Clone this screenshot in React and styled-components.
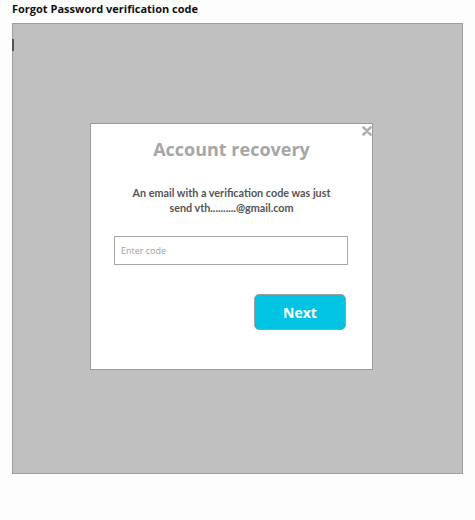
import React from 'react'
import styled, { createGlobalStyle } from 'styled-components'

const Global = createGlobalStyle`
  html, body {
    margin: 0;
    padding: 0;
    background: #fdfdfd;
    font-family: "Open Sans", "Liberation Sans", sans-serif;
  }
`

const Page = styled.div`
  width: 475px;
  height: 520px;
  padding: 0 0 0 12px;
  box-sizing: border-box;
`

const Title = styled.h1`
  margin: 0;
  height: 23px;
  line-height: 18px;
  font-size: 11px;
  font-weight: 700;
  color: #111;
`

const Backdrop = styled.div`
  position: relative;
  width: 451px;
  height: 451px;
  box-sizing: border-box;
  background: #c0c0c0;
  border: 1px solid #9e9e9e;
  padding: 99px 0 0 77px;
`

const Caret = styled.span`
  position: absolute;
  left: -1px;
  top: 15px;
  width: 2px;
  height: 12px;
  background: #555;
`

const Modal = styled.div`
  position: relative;
  width: 283px;
  height: 247px;
  box-sizing: border-box;
  background: #fff;
  border: 1px solid #9a9a9a;
  display: flex;
  flex-direction: column;
  align-items: center;
`

const Close = styled.svg`
  position: absolute;
  top: 2px;
  right: 0;
`

const Heading = styled.h2`
  margin: 12px 0 0;
  font-size: 18px;
  line-height: 26px;
  font-weight: 700;
  color: #a6a6a6;
`

const Message = styled.p`
  margin: 23px 0 0;
  font-family: Lato, "Open Sans", sans-serif;
  font-size: 10.8px;
  line-height: 15px;
  font-weight: 700;
  color: #555;
  text-align: center;
`

const CodeInput = styled.input`
  align-self: flex-start;
  margin: 21px 0 0 23px;
  width: 234px;
  height: 29px;
  box-sizing: border-box;
  border: 1px solid #a6a6a6;
  padding: 0 6px;
  font-family: inherit;
  font-size: 9px;
  outline: none;
  &::placeholder {
    color: #a0a0a0;
  }
`

const Actions = styled.div`
  align-self: stretch;
  display: flex;
  justify-content: flex-end;
  padding: 29px 26px 0 0;
`

const NextButton = styled.button`
  width: 92px;
  height: 36px;
  box-sizing: border-box;
  border: 1px solid #a0a0a0;
  border-radius: 5px;
  background: #00c4e2;
  color: #fff;
  font-family: inherit;
  font-size: 14px;
  font-weight: 700;
`

export default function App() {
  return (
    <Page>
      <Global />
      <Title>Forgot Password verification code</Title>
      <Backdrop>
        <Caret />
        <Modal>
          <Close width="10" height="10" viewBox="0 0 10 10">
            <path d="M1.5 1.5 L8.5 8.5 M8.5 1.5 L1.5 8.5" stroke="#b0b0b0" strokeWidth="2.6" strokeLinecap="round" />
          </Close>
          <Heading>Account recovery</Heading>
          <Message>
            An email with a verification code was just
            <br />
            send vth..........@gmail.com
          </Message>
          <CodeInput placeholder="Enter code" />
          <Actions>
            <NextButton>Next</NextButton>
          </Actions>
        </Modal>
      </Backdrop>
    </Page>
  )
}
